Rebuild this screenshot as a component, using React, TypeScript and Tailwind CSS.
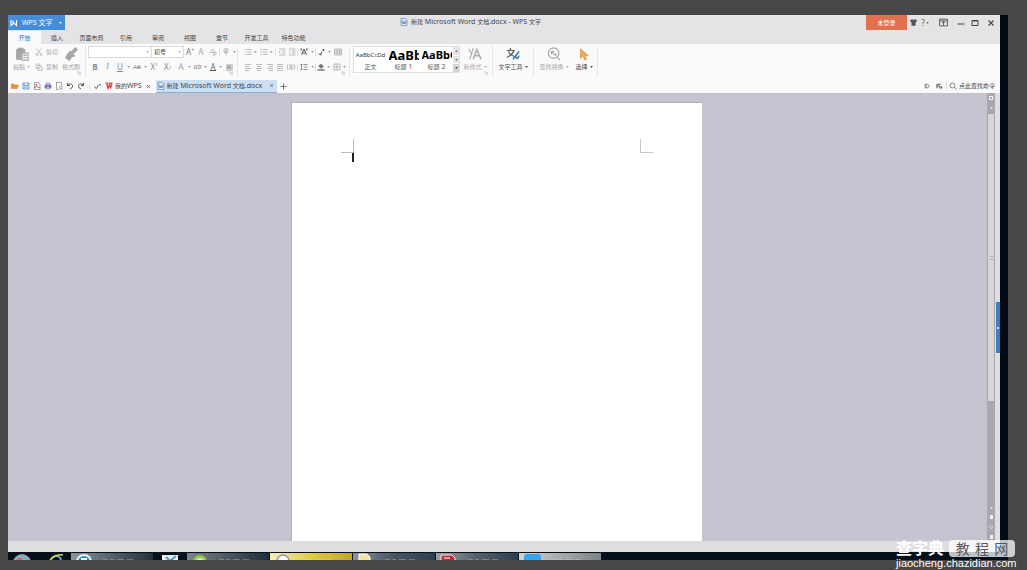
import type { ReactNode } from "react";

const iconPaths: Record<string, ReactNode> = {
  paste: (
    <>
      <path d="M2 3h9v3H7v8H2z M4 1.5h5v3H4z" fill="currentColor" />
      <path d="M8 7h7v8H8z" fill="#f8f8f8" />
      <path d="M9.5 9.5h4 M9.5 12h4" />
    </>
  ),
  cut: <path d="M3 1l8 10 M13 1L5 11 M2 13a2 2 0 1 0 4 0a2 2 0 1 0-4 0 M10 13a2 2 0 1 0 4 0a2 2 0 1 0-4 0" />,
  copy: <path d="M2 2h7l1 2v7H2z M6 5h6l2 3v7H6z" />,
  brush: (
    <>
      <path d="M13 1l2 2-4 4-2-2z M7 5l5 5-2 1-4-4z" fill="currentColor" />
      <path d="M5 7l4 4-3 4-4-3z" fill="currentColor" />
    </>
  ),
  eraser: <path d="M2 8l5-6 4 7H5z M8 14l5-6 2 3-3 3z" />,
  phonetic: <path d="M3 2h10 M8 1v4 M2 6h12 M8 6v9 M4 9h8" />,
  bullets: <path d="M1 3h2 M5 3h10 M1 8h2 M5 8h10 M1 13h2 M5 13h10" />,
  numbers: <path d="M2 1v4 M5 3h10 M1 8h3 M5 8h10 M1 13h3 M6 13h9" />,
  outdent: <path d="M2 2h13 M8 6h7 M8 10h7 M2 14h13 M5 5L2 8l3 3" />,
  indent: <path d="M2 2h13 M8 6h7 M8 10h7 M2 14h13 M2 5l3 3-3 3" />,
  asian: <path d="M1 2h3 M2 2v3 M12 2h3 M14 2v3 M3 14L8 2l5 12 M5 10h6" strokeWidth="2" />,
  sort: <path d="M11 2v4 M9 4h4 M8 7L4 14 M2 11l2 3 3-1" strokeWidth="1.800" />,
  grid: <path d="M1 2h14v12H1z M1 6h14 M1 10h14 M6 2v12 M11 2v12" />,
  left: <path d="M2 3h12 M2 7h8 M2 11h12 M2 15h8" />,
  center: <path d="M2 3h12 M4 7h8 M2 11h12 M4 15h8" />,
  right: <path d="M2 3h12 M6 7h8 M2 11h12 M6 15h8" />,
  justify: <path d="M2 3h12 M2 7h12 M2 11h12 M2 15h12" />,
  spread: <path d="M1 3v10 M15 3v10 M3 4h10 M3 12h10 M4 8h8 M8 4v8" />,
  spacing: <path d="M7 3h8 M7 8h8 M7 13h8 M3 2v12 M1 4l2-2 2 2 M1 12l2 2 2-2" />,
  fill: (
    <>
      <path d="M3 6l5-4 5 5-5 4z" fill="currentColor" />
      <path d="M1 14h14" strokeWidth="3" />
    </>
  ),
  border: <path d="M2 2h12v12H2z M8 2v12 M2 8h12" />,
  newstyle: (
    <>
      <path d="M1 2l3 6 M6 1L4 8l-2 6" />
      <path d="M6 14l4-11 5 11 M8 10h5" strokeWidth="1.800" />
    </>
  ),
  texttool: (
    <>
      <path d="M1 4h9 M5 1v3 M3 5c1 4 4 5 7 6 M9 4C8 8 5 10 1 12" stroke="#555" />
      <path d="M15 5l-4 5-3 4 M15 10l-2 3-3-2" stroke="#3b78b5" strokeWidth="1.800" />
    </>
  ),
  find: <path d="M7.500 1a6 6 0 1 0 .1 0z M12 12l3 3 M5 5l5 5 M5 5h3 M5 5v3 M10 10V7" />,
  cursor: <path d="M4 2v11l3-3 2 5 2-1-2-4h4z" fill="#eda65b" stroke="#e39f5a" strokeWidth="1" />,
  folder: <path d="M1 13V4h4l2 2h6v2 M1 13l3-6h11l-3 6z" fill="#ee9c35" stroke="#d9822b" />,
  save: <path d="M2 2h12v12H2z M4 2v5h8V2 M4 14v-4h8v4" stroke="#5b93d6" strokeWidth="1.600" />,
  pdf: (
    <>
      <path d="M3 1h8l3 3v11H3z" stroke="#777" />
      <path d="M1 12c5-1 7-4 6-7s-2 0 0 3 4 4 7 3" stroke="#c25045" strokeWidth="1.600" />
    </>
  ),
  print: (
    <>
      <path d="M2 6h12v6H2z" fill="#8a86c8" stroke="#6460b0" />
      <path d="M5 2h6v4H5z M5 10h6v4H5z" fill="#fff" stroke="#6460b0" />
    </>
  ),
  preview: <path d="M13 7V1H3v14h5 M9 11a2.500 2.500 0 1 0 5 0a2.500 2.500 0 1 0-5 0 M13 13l2 2" stroke="#777" />,
  undo: <path d="M3 2v5h5 M3 7c3-5 10-4 10 1 0 3-2 5-5 6" strokeWidth="2" />,
  redo: <path d="M13 2v5H8 M13 7C10 2 3 3 3 8c0 3 2 5 5 6" strokeWidth="2" />,
  pin: <path d="M1 8l4 5 5-8 M11 3h3v3" strokeWidth="2.200" />,
  doc: (
    <>
      <path d="M2 1h9l3 3v11H2z" fill="#dfe9f7" stroke="#5a82b5" />
      <path d="M4 5l2 7 2-5 2 5 2-7" stroke="#3568a9" />
    </>
  ),
  wpsred: <path d="M1 2h6 M9 2h6 M3 2l3 11 3-9 2 9 3-11" stroke="#d94a45" strokeWidth="2.500" />,
  wps: <path d="M2 2v11l6-5 5 5V2 M6 3v5" strokeWidth="2.200" />,
  close: <path d="M3 3l10 10 M13 3L3 13" strokeWidth="2.200" />,
  plus: <path d="M8 1v14 M1 8h14" strokeWidth="1.800" />,
  shirt: <path d="M1 3l4-2 3 2 3-2 4 2-1 4-2-1v9H4V6L2 7z" fill="currentColor" />,
  window: <path d="M1 2h14v12H1z M1 5h14 M8 13V7 M5 9l3-3 3 3" strokeWidth="1.600" />,
  minimize: <path d="M1 10h14" strokeWidth="2" />,
  maximize: <path d="M2 3h12v10H2z M2 4h12" strokeWidth="2" />,
  search: <path d="M2 7a5 5 0 1 0 10 0a5 5 0 1 0-10 0 M11 11l4 4" />,
  skin: <path d="M3 3h5c7 0 7 10 0 10H3z M3 8h6" strokeWidth="2" />,
  layout: <path d="M2 3h9 M2 3v9 M2 7h6 M7 9h7l-3 4z" strokeWidth="2.200" />,
};

function Icon({ name, className = "size-2.5" }: { name: string; className?: string }) {
  return (
    <svg viewBox="0 0 16 16" fill="none" stroke="currentColor" strokeWidth="1.300" className={`shrink-0 ${className}`} aria-hidden="true">
      {iconPaths[name]}
    </svg>
  );
}

function Caret({ className = "text-[#777]" }: { className?: string }) {
  return (
    <svg viewBox="0 0 4 3" className={`h-[2px] w-[3px] shrink-0 ${className}`} aria-hidden="true">
      <path d="M0 0h4L2 3z" fill="currentColor" />
    </svg>
  );
}

function Tool({ label, w, children, className = "text-[#9a9a9a]" }: { label: string; w: string; children: ReactNode; className?: string }) {
  return (
    <button aria-label={label} className={`flex h-3 shrink-0 items-center justify-center ${w} ${className}`}>
      {children}
    </button>
  );
}

function Drop({ label }: { label: string }) {
  return (
    <button aria-label={label} className="flex h-3 w-[5px] shrink-0 items-center justify-center">
      <Caret className="text-[#999]" />
    </button>
  );
}

function Rule({ className = "h-2" }: { className?: string }) {
  return <span className={`w-px shrink-0 bg-[#dedee0] ${className}`} />;
}

function Latin({ children }: { children: ReactNode }) {
  return <span className="text-[7px]">{children}</span>;
}

function Launcher({ label }: { label: string }) {
  return (
    <button aria-label={label} className="absolute right-1 bottom-0.5 size-1 text-[#bbb]">
      <svg viewBox="0 0 4 4" className="size-1" fill="none" stroke="currentColor"><path d="M0 1h2 M3 1v3H1" /></svg>
    </button>
  );
}

function BigTool({ icon, text, w, className, caret = true }: { icon: string; text: string; w: string; className: string; caret?: boolean }) {
  return (
    <button className={`flex h-[26px] shrink-0 flex-col items-center justify-between ${w} ${className}`}>
      <Icon name={icon} className="size-4 p-px" />
      <span className="flex items-center gap-[2px] leading-[10px] whitespace-nowrap">
        {text}
        {caret && <Caret className="" />}
      </span>
    </button>
  );
}

const menuTabs = [
  ["开始", "w-[33px]"],
  ["插入", "w-8"],
  ["页面布局", "w-[37px]"],
  ["引用", "w-8"],
  ["审阅", "w-8"],
  ["视图", "w-8"],
  ["章节", "w-8"],
  ["开发工具", "w-[37px]"],
  ["特色功能", "w-[37px]"],
];

const quickTools = [
  ["打开", "folder"],
  ["保存", "save"],
  ["输出为PDF", "pdf"],
  ["打印", "print"],
  ["打印预览", "preview"],
  ["撤销", "undo"],
  ["恢复", "redo"],
];

function TitleBar() {
  return (
    <header className="flex h-4 shrink-0 items-start bg-[#e4e4e6] text-[#555]">
      <button className="flex h-[15px] w-[57px] items-center gap-1 bg-[#458ddb] pl-0.5 text-[7px] text-white">
        <Icon name="wps" className="size-2" />
        <span className="flex-1 text-left leading-3 whitespace-nowrap">WPS 文字</span>
        <span className="pr-[3px]"><Caret className="text-white" /></span>
      </button>
      <h1 className="flex h-[14px] flex-1 items-center justify-center gap-[3px] pl-2.5 leading-3 whitespace-nowrap text-[#444]">
        <Icon name="doc" className="size-2" />
        <span>新建<Latin> Microsoft Word </Latin>文档<Latin>.docx - WPS </Latin>文字</span>
      </h1>
      <div className="flex h-[15px] items-center">
        <button className="h-[15px] w-[41px] bg-[#e2704f] text-white">未登录</button>
        <Tool label="皮肤" w="w-3" className="text-[#555]"><Icon name="shirt" className="size-[7px]" /></Tool>
        <Tool label="帮助" w="w-3" className="gap-px text-[8px] text-[#555]">?<Caret /></Tool>
        <Rule className="mx-px h-2" />
        <Tool label="功能区显示" w="w-[18px]" className="text-[#555]"><Icon name="window" className="size-[9px]" /></Tool>
        <Rule />
        <Tool label="最小化" w="w-[15px]" className="text-[#444]"><Icon name="minimize" className="size-2" /></Tool>
        <Tool label="最大化" w="w-[13px]" className="text-[#444]"><Icon name="maximize" className="size-2" /></Tool>
        <Tool label="关闭" w="w-[19px]" className="text-[#444]"><Icon name="close" className="size-2" /></Tool>
      </div>
    </header>
  );
}

function Ribbon() {
  return (
    <div className="flex h-[35px] shrink-0 overflow-hidden bg-[#fafafb] py-[2px] text-[#a5a5a5]">
      <section aria-label="剪贴板" className="relative flex w-[78px] shrink-0 border-r border-[#e6e6e8]">
        <BigTool icon="paste" text="粘贴" w="w-[27px]" className="text-[#a5a5a5]" />
        <div className="flex w-[25px] flex-col gap-[3px]">
          <button className="flex h-3 items-center gap-[3px]"><Icon name="cut" className="size-2" />剪切</button>
          <button className="flex h-3 items-center gap-[3px]"><Icon name="copy" className="size-2" />复制</button>
        </div>
        <BigTool icon="brush" text="格式刷" w="w-[22px]" className="text-[#a5a5a5]" caret={false} />
        <Launcher label="剪贴板选项" />
      </section>

      <section aria-label="字体" className="relative flex w-[152px] shrink-0 flex-col gap-[3px] border-r border-[#e6e6e8] pl-0.5">
        <div className="flex h-3 items-center">
          <label className="relative flex h-3 w-16 items-center border border-[#dadada] bg-white">
            <select aria-label="字体" className="h-full w-full appearance-none bg-transparent"><option></option></select>
            <span className="pointer-events-none absolute right-0.5"><Caret className="text-[#aaa]" /></span>
          </label>
          <label className="relative flex h-3 w-8 items-center border border-l-0 border-[#dadada] bg-white text-[#444]">
            <select aria-label="字号" className="h-full w-full appearance-none bg-transparent pl-0.5 leading-[10px]"><option>初号</option></select>
            <span className="pointer-events-none absolute right-0.5"><Caret className="text-[#aaa]" /></span>
          </label>
          <Tool label="增大字号" w="w-3" className="text-[8px] text-[#777]">A<sup className="text-[5px]">+</sup></Tool>
          <Tool label="减小字号" w="w-[11px]" className="text-[8px]">A<sup className="text-[5px]">-</sup></Tool>
          <Tool label="清除格式" w="w-3"><Icon name="eraser" className="size-2" /></Tool>
          <Rule />
          <Tool label="拼音指南" w="w-3"><Icon name="phonetic" className="size-2" /></Tool>
          <Drop label="拼音选项" />
        </div>
        <div className="flex h-3 items-center pl-px text-[8px]">
          <Tool label="加粗" w="w-3" className="font-bold text-[#888]">B</Tool>
          <Tool label="倾斜" w="w-[13px]" className="font-['Liberation_Serif',serif] text-[#888] italic">I</Tool>
          <Tool label="下划线" w="w-3" className="text-[#888] underline">U</Tool>
          <Drop label="下划线选项" />
          <Tool label="删除线" w="w-3" className="text-[6px] text-[#999] line-through">AB</Tool>
          <Drop label="删除线选项" />
          <Tool label="上标" w="w-3" className="text-[#888]">X<sup className="text-[4px]">2</sup></Tool>
          <Tool label="下标" w="w-[15px]" className="text-[#888]">X<sub className="text-[4px]">2</sub></Tool>
          <Tool label="文字效果" w="w-3">A</Tool>
          <Drop label="文字效果选项" />
          <Tool label="突出显示" w="w-[11px]" className="text-[7px] text-[#888] italic">ab</Tool>
          <Drop label="突出显示选项" />
          <Tool label="字体颜色" w="w-[10px]" className="text-[#666]"><span className="border-b border-[#555] leading-[7px]">A</span></Tool>
          <Drop label="字体颜色选项" />
          <Tool label="字符底纹" w="w-3" className="text-[#777]"><span className="flex size-[7px] items-center justify-center bg-[#cfcfcf] text-[6px]">A</span></Tool>
        </div>
        <Launcher label="字体选项" />
      </section>

      <section aria-label="段落" className="relative flex w-[112px] shrink-0 flex-col gap-[3px] border-r border-[#e6e6e8] pl-1">
        <div className="flex h-3 items-center">
          <Tool label="项目符号" w="w-[11px]"><Icon name="bullets" className="size-2" /></Tool>
          <Drop label="项目符号选项" />
          <Tool label="编号" w="w-[11px]"><Icon name="numbers" className="size-2" /></Tool>
          <Drop label="编号选项" />
          <Rule className="mx-px h-2" />
          <Tool label="减少缩进" w="w-[10px]"><Icon name="outdent" className="size-2" /></Tool>
          <Tool label="增加缩进" w="w-[10px]"><Icon name="indent" className="size-2" /></Tool>
          <Rule />
          <Tool label="中文版式" w="w-3" className="text-[#555]"><Icon name="asian" className="size-2" /></Tool>
          <Drop label="中文版式选项" />
          <Rule />
          <Tool label="排序" w="w-[11px]" className="text-[#444]"><Icon name="sort" className="size-2" /></Tool>
          <Drop label="排序选项" />
          <Tool label="显示标记" w="w-3"><Icon name="grid" className="size-2" /></Tool>
        </div>
        <div className="flex h-3 items-center">
          <Tool label="左对齐" w="w-[11px]"><Icon name="left" className="size-2" /></Tool>
          <Tool label="居中" w="w-[11px]"><Icon name="center" className="size-2" /></Tool>
          <Tool label="右对齐" w="w-[11px]"><Icon name="right" className="size-2" /></Tool>
          <Tool label="两端对齐" w="w-[10px]"><Icon name="justify" className="size-2" /></Tool>
          <Tool label="分散对齐" w="w-3"><Icon name="spread" className="size-2" /></Tool>
          <Rule />
          <Tool label="行距" w="w-3" className="text-[#555]"><Icon name="spacing" className="size-2" /></Tool>
          <Drop label="行距选项" />
          <Rule />
          <Tool label="底纹颜色" w="w-[10px]" className="text-[#777]"><Icon name="fill" className="size-2" /></Tool>
          <Drop label="底纹选项" />
          <Tool label="边框" w="w-[11px]"><Icon name="border" className="size-2" /></Tool>
          <Drop label="边框选项" />
        </div>
        <Launcher label="段落选项" />
      </section>

      <section aria-label="样式" className="relative flex w-[143px] shrink-0 border-r border-[#e6e6e8] pl-[3px]">
        <div className="flex h-[27px] w-[107px] border border-[#e0e0e2] bg-white text-[#555]">
          <button className="flex w-[33px] flex-col items-center justify-end overflow-hidden">
            <span className="flex h-[15px] items-center text-[6px] text-[#333]">AaBbCcDd</span>
            <span className="leading-[10px]">正文</span>
          </button>
          <button className="flex w-[33px] flex-col items-center justify-end overflow-hidden">
            <span className="flex h-[15px] w-[30px] items-center overflow-hidden text-[13px] font-bold text-black">AaBb</span>
            <span className="leading-[10px]">标题<Latin> 1</Latin></span>
          </button>
          <button className="flex w-[33px] flex-col items-center justify-end overflow-hidden">
            <span className="flex h-[15px] w-[30px] items-center overflow-hidden text-[11px] font-bold text-black">AaBbC</span>
            <span className="leading-[10px]">标题<Latin> 2</Latin></span>
          </button>
          <div className="flex w-1.5 flex-col gap-px bg-white text-[#777]">
            <button aria-label="上一行" className="flex flex-1 items-center justify-center bg-[#e4e4e6]"><span className="rotate-180"><Caret className="block" /></span></button>
            <button aria-label="下一行" className="flex flex-1 items-center justify-center bg-[#e4e4e6]"><Caret /></button>
            <button aria-label="更多样式" className="flex flex-1 items-center justify-center bg-[#d4d4d6]"><Caret className="text-[#444]" /></button>
          </div>
        </div>
        <BigTool icon="newstyle" text="新样式" w="w-[30px]" className="text-[#adadad]" />
        <Launcher label="样式选项" />
      </section>

      <section aria-label="工具" className="flex w-[41px] shrink-0 justify-center border-r border-[#e6e6e8]">
        <BigTool icon="texttool" text="文字工具" w="w-9" className="text-[#444]" />
      </section>
      <section aria-label="编辑" className="flex w-16 shrink-0 border-r border-[#e6e6e8] pl-0.5">
        <BigTool icon="find" text="查找替换" w="w-9" className="text-[#a5a5a5]" />
        <BigTool icon="cursor" text="选择" w="w-6" className="text-[#444]" />
      </section>
    </div>
  );
}

function DocumentBar() {
  return (
    <div className="flex h-[14px] shrink-0 items-center bg-[#fafafb] text-[#444]">
      <div className="flex items-center pl-px">
        {quickTools.map(([label, icon]) => (
          <Tool key={icon} label={label} w="w-[11px]" className="text-[#555]"><Icon name={icon} className="size-2" /></Tool>
        ))}
        <Rule className="mx-[3px] h-2" />
        <Tool label="自定义" w="w-2" className="text-[#555]"><Icon name="pin" className="size-[7px]" /></Tool>
      </div>
      <nav aria-label="文档" className="flex h-full items-center pl-1">
        <button className="flex items-center gap-0.5 leading-3 whitespace-nowrap"><Icon name="wpsred" className="size-2" /><span>我的<Latin>WPS</Latin></span></button>
        <Tool label="关闭我的WPS" w="w-[14px]" className="text-[#555]"><Icon name="close" className="size-[5px]" /></Tool>
        <div className="flex h-[13px] w-[121px] items-center border-b border-[#86aedb] bg-[#cddff3]">
          <button className="flex flex-1 items-center gap-0.5 pl-px leading-3 whitespace-nowrap"><Icon name="doc" className="size-2" /><span>新建<Latin> Microsoft Word </Latin>文档<Latin>.docx</Latin></span></button>
          <Tool label="关闭文档" w="w-[11px]" className="text-[#555]"><Icon name="close" className="size-[5px]" /></Tool>
        </div>
        <Tool label="新建文档" w="w-[14px]" className="text-[#555]"><Icon name="plus" className="size-[7px]" /></Tool>
      </nav>
      <div className="ml-auto flex items-center pr-[5px]">
        <Tool label="皮肤切换" w="w-3" className="text-[#666]"><Icon name="skin" className="size-1.5" /></Tool>
        <Tool label="布局" w="w-[13px]" className="text-[#555]"><Icon name="layout" className="size-[7px]" /></Tool>
        <Rule />
        <button className="flex items-center gap-0.5 pl-0.5 leading-3 whitespace-nowrap"><Icon name="search" className="size-2" />点此查找命令</button>
      </div>
    </div>
  );
}

function Workspace() {
  return (
    <main className="flex min-h-0 flex-1 bg-[#c4c3cf]">
      <div className="flex min-w-0 flex-1 justify-center pt-[9px] pr-0.5">
        <article aria-label="文档页面" className="w-[411px] max-w-full border-t border-l border-[#b0b0b6] bg-white px-[49px] pt-9">
          <div className="flex justify-between">
            <div className="flex flex-col">
              <span className="h-[14px] w-[13px] border-r border-b border-[#bdbdbd]" />
              <span className="h-[9px] w-[13px] border-r-2 border-[#222]" />
            </div>
            <span className="h-[14px] w-[13px] border-b border-l border-[#c8c8c8]" />
          </div>
        </article>
      </div>
      <div aria-label="垂直滚动条" className="flex w-2 flex-col items-center bg-[#a9a8b1] text-[#f2f2f4]">
        <button aria-label="标尺" className="flex h-[9px] w-full items-center justify-center"><span className="size-1 border border-current" /></button>
        <button aria-label="向上滚动" className="flex h-[11px] w-full items-center justify-center"><Caret className="rotate-180" /></button>
        <div className="flex w-full flex-[74] items-center justify-center border border-[#a5a5aa] bg-[#d6d6d9]">
          <span className="h-1 w-[3px] border-y border-[#aaa]" />
        </div>
        <div className="flex-[26]" />
        <button aria-label="向下滚动" className="flex h-[9px] items-center"><Caret className="" /></button>
        <button aria-label="上一页" className="flex h-[10px] items-center"><span className="h-1 w-[3px] bg-current" /></button>
        <button aria-label="选择浏览对象" className="flex h-[10px] items-center"><span className="size-1 rounded-full border border-[#d0d0d4]" /></button>
        <button aria-label="下一页" className="flex h-[9px] items-center"><span className="h-1 w-[3px] bg-current" /></button>
      </div>
      <aside aria-label="任务窗格" className="flex w-[5px] flex-col items-end bg-[#dedee1] pt-[209px]">
        <button aria-label="展开任务窗格" className="flex h-[51px] w-1 items-center justify-center bg-[#3c80c4]"><span className="size-0.5 rounded-full bg-white" /></button>
      </aside>
    </main>
  );
}

const tasks = [
  { label: "通讯", w: "w-[82px]", bg: "from-[#8d949a] to-[#22323d]", icon: <><circle cx="13" cy="9" r="8" fill="#e9f5fb" /><circle cx="13" cy="9" r="6" fill="#1b8fcf" /><path d="M10 5h6v2h-6z" fill="#fff" /></> },
  { label: "邮件", w: "w-8", bg: "from-[#07101b] to-[#07101b]", icon: <><path d="M8 2h16v8H8z" fill="#e8f0f4" /><path d="M12 4l4 4 6-5" fill="none" stroke="#4e9cc6" strokeWidth="2" /></> },
  { label: "浏览器", w: "w-[82px]", bg: "from-[#7e868a] to-[#1f2e39]", icon: <><circle cx="13" cy="9" r="7" fill="#8dcc50" /><circle cx="13" cy="9" r="4" fill="#d8efbd" /></> },
  { label: "聊天", w: "w-[82px]", bg: "from-[#f4efbb] via-[#e0cb42] to-[#c0a52c]", icon: <circle cx="13" cy="8" r="6" fill="#fff" stroke="#999" strokeWidth="1.500" /> },
  { label: "文件夹", w: "w-[82px]", bg: "from-[#8d949a] via-[#465661] to-[#2b414f]", icon: <path d="M6 1h8l3 3v7H6z" fill="#f3e3a0" stroke="#fff" /> },
  { label: "演示", w: "w-[82px]", bg: "from-[#9ba0a4] via-[#536069] to-[#2b3f4c]", icon: <><path d="M5 2h11l3 3v6H5z" fill="#c42d36" stroke="#eee" /><path d="M8 5h6" stroke="#fff" /></> },
  { label: "文字", w: "w-[82px]", bg: "from-[#d0d2d4] via-[#a9abad] to-[#7c8186]", icon: <rect x="5" y="1" width="17" height="9" rx="3" fill="#34a7ef" /> },
];

function Taskbar() {
  return (
    <footer className="flex h-2 shrink-0 items-end gap-px overflow-hidden bg-gradient-to-r from-[#080f19] to-[#04101c]">
      <button aria-label="开始菜单" className="h-2 w-9 pl-0.5">
        <svg viewBox="0 0 26 8" className="h-2 w-[26px]"><circle cx="12" cy="11" r="9" fill="#8ba9c1" /><path d="M6 8q3-3 6-2v3H6z" fill="#dc6b3d" /><path d="M13 6q4 1 5 3h-5z" fill="#8ec26c" /></svg>
      </button>
      <button aria-label="网页" className="h-2 w-[25px]">
        <svg viewBox="0 0 25 8" className="h-2 w-[25px]" fill="none"><circle cx="11" cy="9" r="5" stroke="#55b5dc" strokeWidth="2" /><path d="M5 8q6-6 13-5" stroke="#cbd84c" strokeWidth="1.500" /></svg>
      </button>
      {tasks.map((task) => (
        <button key={task.label} aria-label={task.label} className={`h-[7px] shrink-0 overflow-hidden bg-gradient-to-r ${task.w} ${task.bg}`}>
          <svg viewBox="0 0 82 7" preserveAspectRatio="xMinYMin slice" className="block h-[7px] w-[82px]">
            {task.icon}
            {task.w !== "w-8" && <path d="M32 6.500h5 M39 6.500h4 M46 6.500h7 M56 6.500h6" stroke="#dfe5e8" strokeOpacity="0.300" />}
          </svg>
        </button>
      ))}
    </footer>
  );
}

export default function App() {
  return (
    <div className="relative flex min-h-screen flex-col bg-[#474747] pt-[15px] pr-[19px] pb-[10px] pl-2 font-['Noto_Sans','Noto_Sans_CJK_SC',sans-serif] text-[6px] leading-[10px]">
      <div className="flex flex-1 flex-col bg-[#020b14]">
        <div className="mr-2 flex flex-1 flex-col">
          <TitleBar />
          <nav aria-label="功能区" className="flex h-[13px] shrink-0 bg-[#e4e4e6] text-[#444]">
            {menuTabs.map(([name, width], index) => (
              <button key={name} className={`h-[13px] shrink-0 leading-3 whitespace-nowrap ${width} ${index === 0 ? "bg-[#fafafb] text-[#2e7cc9]" : ""}`}>
                {name}
              </button>
            ))}
          </nav>
          <Ribbon />
          <DocumentBar />
          <Workspace />
          <div className="h-[11px] shrink-0 bg-[#dedee1]" />
        </div>
        <Taskbar />
      </div>
      <div className="absolute right-3 bottom-px w-[119px] text-white">
        <div className="flex items-center justify-between">
          <span className="text-[16px] leading-[17px] font-bold whitespace-nowrap">查字典</span>
          <span className="flex h-[17px] w-[66px] items-center justify-around rounded-sm bg-white/75 px-1 text-[14px] leading-4 text-[#55585d]">
            <span>教</span><span>程</span><span>网</span>
          </span>
        </div>
        <a href="#top" className="block h-3 font-['Liberation_Sans',sans-serif] text-[11px] leading-[12px] whitespace-nowrap">jiaocheng.chazidian.com</a>
      </div>
    </div>
  );
}
